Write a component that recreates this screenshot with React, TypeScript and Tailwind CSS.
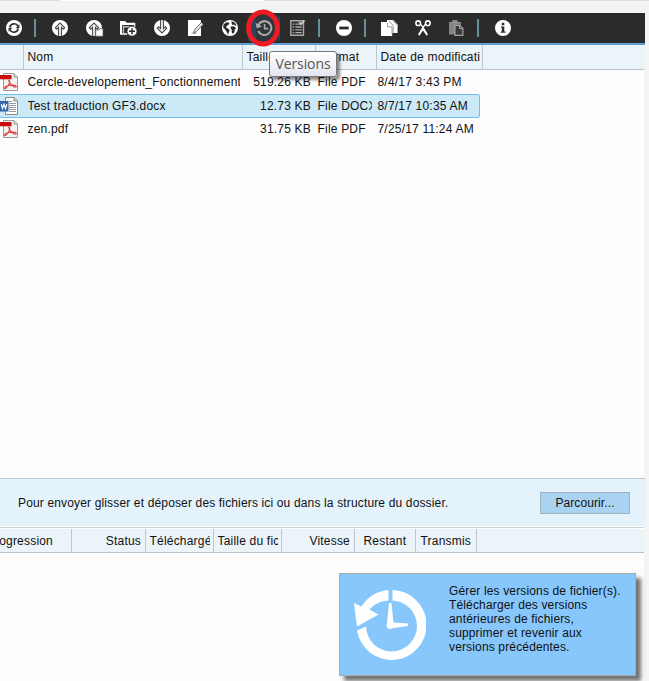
import type { ReactNode } from "react";

const W = "#fff";

function Icon({ children }: { children: ReactNode }) {
  return (
    <svg className="block h-4 w-4 overflow-visible" viewBox="0 0 16 16" fill="none">
      {children}
    </svg>
  );
}

function Tool({ children, first }: { children: ReactNode; first?: boolean }) {
  return (
    <div className={first ? "w-[31px] shrink-0 pl-[6px]" : "w-[34px] shrink-0 pl-[9px]"}>
      <Icon>{children}</Icon>
    </div>
  );
}

function Sep({ narrow }: { narrow?: boolean }) {
  return (
    <div className={narrow ? "w-[11px] shrink-0 pl-[3px]" : "w-3 shrink-0 pl-[3px]"}>
      <div className="h-[18px] w-[1.5px] bg-[#659097]" />
    </div>
  );
}

function Toolbar() {
  return (
    <div className="relative flex h-[32px] w-[645px] items-center border-b-2 border-[#649fd2] bg-[#2b2b2b]">
      <Tool first>
        <circle cx="8" cy="8" r="8" fill={W} />
        <path d="M3.8 7.2A4.4 4.4 0 0 1 12 6.2M12.2 8.8A4.4 4.4 0 0 1 4 9.8" stroke="#2b2b2b" strokeWidth="1.6" />
        <path d="M13.4 4.2v4H9.6zM2.6 11.8v-4h3.8z" fill="#2b2b2b" />
      </Tool>
      <Sep />
      <Tool>
        <circle cx="8" cy="8" r="8" fill={W} />
        <path d="M6.6 15.8V7.4L4.7 9.3 3.3 7.8 8 3l4.7 4.8-1.4 1.5-1.9-1.9v8.4" stroke="#444" strokeWidth="1.1" />
      </Tool>
      <Tool>
        <circle cx="8" cy="8" r="8" fill={W} />
        <path d="M6.6 15.8V7.4L4.7 9.3 3.3 7.8 8 3l4.7 4.8-1.4 1.5-1.9-1.9v8.4" stroke="#444" strokeWidth="1.1" />
        <path d="M9.7 16.2V10h3.1l1-1.3h3.2v7.5z" fill={W} stroke="#555" strokeWidth=".7" />
      </Tool>
      <Tool>
        <path d="M0 1h5.2l1.4 1.8h8.7V7h-1.2V5H2.2v8.2h5v1.5H0z" fill={W} />
        <path d="M3 6h7L8.5 7.4H4.2v5.5H3z" fill="#bbb" />
        <circle cx="12" cy="11.2" r="4.9" fill={W} stroke="#2b2b2b" strokeWidth=".6" />
        <path d="M12 8.2v6M9 11.2h6" stroke="#2b2b2b" strokeWidth="1.5" />
      </Tool>
      <Tool>
        <circle cx="8" cy="8" r="8" fill={W} />
        <path d="M6.6 0v8.6L4.7 6.7 3.3 8.2 8 13l4.7-4.8-1.4-1.5-1.9 1.9V0" stroke="#444" strokeWidth="1.1" />
      </Tool>
      <Tool>
        <path d="M0 0h13v16H0z" fill={W} />
        <path d="M5.6 12.9l1-3 6.8-7.4 1.8 1.7-6.8 7.5z" fill="#eee" stroke="#555" strokeWidth=".9" />
        <path d="M3.5 13.3h5" stroke="#999" />
      </Tool>
      <Tool>
        <circle cx="8" cy="8" r="8" fill={W} />
        <path d="M1.5 4.5l3-2.2 3 .5-.6 1.8-1.8.8-1.1 2 2 1.2 1.8 1.8-1.2 2.1-.5 2.2-1.7-3.2-1.5-2.3-1.7-1.4zM9.5 1.3l3.2 1.2 1.8 3-1.2.2-1.2-1.3-1.8.5-.8-1.8zM9 6.5l2.8-.2 2.4 1.9-1.4 1.1-.4 2.7-1.5 1.9-1.3-1.8.2-2.2L8.4 8z" fill="#2b2b2b" />
      </Tool>
      <div className="mx-[1px] flex h-[27px] w-8 shrink-0 items-center rounded-sm bg-[#2e4360] pl-2">
        <div className="flex h-[27px] w-[22px] items-center bg-[#2f353d]">
          <Icon>
            <path d="M2.2 5.2A6.9 6.9 0 1 1 2.2 11" stroke="#a9a9a9" strokeWidth="2.1" />
            <path d="M-.4 2.8l1.2 5.6L6 6.6z" fill="#a9a9a9" />
            <path d="M8.6 4v4.6h3.7" stroke="#a9a9a9" strokeWidth="1.6" />
          </Icon>
        </div>
      </div>
      <Tool>
        <path d="M.8.8h12.7v14.4H.8z" stroke="#aaa" strokeWidth="1.4" />
        <path d="M2.5 4.2h1.7M2.5 7h1.7M2.5 9.8h1.7M2.5 12.7h1.7M5.3 4.2h6.5M5.3 7h6.5M5.3 9.8h6.5M5.3 12.7h6.5" stroke="#aaa" strokeWidth="1.3" />
        <path d="M9.3 2l1.8 2.2L14.5.5" stroke="#ccc" strokeWidth="1.8" />
      </Tool>
      <Sep />
      <Tool>
        <circle cx="8" cy="8" r="8" fill={W} />
        <path d="M3.3 6.6h9.4v2.8H3.3z" fill="#2b2b2b" />
      </Tool>
      <Sep narrow />
      <Tool>
        <path d="M6 0h6.2L16.6 4.4V13H6z" fill={W} />
        <path d="M0 2h6.5l4.7 4.4V16H0z" fill={W} />
        <path d="M6.5 2.6v4.2H11V14M7.5.8l4.7 4.6V13M12 .8l4 4" stroke="#777" strokeWidth=".7" />
      </Tool>
      <Tool>
        <circle cx="3.2" cy="3.2" r="2.3" stroke={W} strokeWidth="1.6" />
        <circle cx="12.8" cy="3.2" r="2.3" stroke={W} strokeWidth="1.6" />
        <path d="M5 4.5l2.2 3L3.2 14l1 2L8 10.5l3.8 5.5 1-2-4-6.5 2.2-3L9.8 4 8 6.3 6.2 4z" fill={W} />
      </Tool>
      <Tool>
        <path d="M0 2h3.4V.6h5V2H12v2.8H6V14.5H0z" fill="#858585" />
        <path d="M4 .8h4v2H4z" stroke="#999" />
        <path d="M5.9 5.3h4.8l3.2 3.1v7h-8z" fill="#3a3a3a" stroke="#a5a5a5" strokeWidth="1.2" />
        <path d="M10.5 5.5v3h3" stroke="#a5a5a5" />
      </Tool>
      <Sep />
      <Tool>
        <circle cx="8" cy="8" r="8" fill={W} />
        <path d="M6.8 2.8h2.5v2.4H6.8zM6 6.4h3.3v5H10.4v1.4H5.8v-1.4h1V7.7H6z" fill="#2b2b2b" />
      </Tool>
      <svg className="absolute top-[-5px] left-[245px] z-10 h-10 w-9" viewBox="0 0 36 40" fill="none">
        <ellipse cx="18" cy="20" rx="14.4" ry="16" stroke="#ed1c24" strokeWidth="5" />
      </svg>
      <div className="absolute top-[38px] left-[269px] z-20 flex h-[26px] w-[68px] items-center justify-center rounded-[3px] border border-[#777] bg-linear-to-b from-white to-[#e5e5f0] font-['Open_Sans',sans-serif] text-[14px] tracking-[-0.1px] text-[#575757] shadow-[3px_3px_3px_rgba(0,0,0,0.45)]">
        Versions
      </div>
    </div>
  );
}

function PdfIcon() {
  return (
    <svg className="block h-[18px] w-[20px]" viewBox="0 0 20 18" fill="none">
      <path d="M3.5.5H14L17.5 4v13.5h-14z" fill="#f4f4f4" stroke="#999" />
      <path d="M14 .5V4h3.5" fill="#ddd" stroke="#999" />
      <path d="M0 2h11.5v4.3H0z" fill="#c90d0d" />
      <path d="M8.7 7.2c2 0 .6 3.5-.8 5.6-1 1.7-2.9 3.5-3.4 2.4-.7-1.4 4.4-3.2 8.2-3.1 4 .1 4.5 2.1 2.5 2-2.6-.1-6.1-4.1-6.5-6.9z" stroke="#df4545" strokeWidth="1.1" />
    </svg>
  );
}

function WordIcon() {
  return (
    <svg className="block h-[18px] w-[20px]" viewBox="0 0 20 18" fill="none">
      <path d="M5.5.5H14L17.5 4v13.5h-12z" fill="#fff" stroke="#888" />
      <path d="M14 .5V4h3.5" fill="#ddd" stroke="#888" />
      <path d="M9 4.5h3.5M9 6.5h7M9 8.5h7M9 10.5h7M9 12.5h7M9 14.5h7" stroke="#999" />
      <path d="M0 4h8.5v10.5H0z" fill="#3463a5" />
      <path d="M1.3 7l1.2 4.5L4 7.3l1.6 4.2L6.8 7" stroke="#fff" strokeWidth="1.2" />
    </svg>
  );
}

type FileRow = { name: string; size: string; format: string; date: string; word?: boolean };
const files: FileRow[] = [
  { name: "Cercle-developement_Fonctionnement", size: "519.26 KB", format: "File PDF", date: "8/4/17 3:43 PM" },
  { name: "Test traduction GF3.docx", size: "12.73 KB", format: "File DOCX", date: "8/7/17 10:35 AM", word: true },
  { name: "zen.pdf", size: "31.75 KB", format: "File PDF", date: "7/25/17 11:24 AM" },
];

function Row({ file }: { file: FileRow }) {
  return (
    <div
      className={
        file.word
          ? "flex h-6 w-[480px] items-center rounded-r-[3px] border-y border-r border-[#70bdf2] bg-[#cce9f7]"
          : "flex h-[22px] w-[480px] items-center"
      }
    >
      <div className="w-[27.5px] shrink-0">{file.word ? <WordIcon /> : <PdfIcon />}</div>
      <div className="w-[212.5px] shrink-0 overflow-hidden whitespace-nowrap">{file.name}</div>
      <div className="w-[71px] shrink-0 text-right">{file.size}</div>
      <div className="ml-[6.5px] w-[54px] shrink-0 overflow-hidden whitespace-nowrap">{file.format}</div>
      <div className="ml-[6px] whitespace-nowrap">{file.date}</div>
    </div>
  );
}

export default function App() {
  return (
    <div className="h-[681px] w-[649px] overflow-hidden bg-[#f4f4f4] font-['Liberation_Sans',Arial,sans-serif] text-[12px] leading-[14px] tracking-[0.2px] text-[#111]">
      <div className="flex h-[13px]">
        <div className="h-px w-[60px] bg-[#ddd]" />
        <div className="h-px w-[204px] bg-white" />
        <div className="h-px flex-1 bg-[#dedede]" />
      </div>
      <Toolbar />
      <div className="h-[636px] w-[644px] bg-[#fdfdfd]">
        <div className="flex h-[25px] border-b border-[#b7c3cf] bg-[#ebf4f8] leading-[25px] whitespace-nowrap">
          <div className="w-6 shrink-0 border-r border-[#bdc8d4]" />
          <div className="w-[219px] shrink-0 border-r border-[#bdc8d4] pl-[3.5px]">Nom</div>
          <div className="w-[73px] shrink-0 border-r border-[#bdc8d4] pl-[3.5px]">Taille</div>
          <div className="w-[61px] shrink-0 border-r border-[#bdc8d4] pl-1">Format</div>
          <div className="w-[106px] shrink-0 overflow-hidden border-r border-[#bdc8d4] pl-[3.5px]">Date de modificati</div>
        </div>
        <div className="h-[408px] pt-[1px]">
          <div className="h-[23px]"><Row file={files[0]} /></div>
          <Row file={files[1]} />
          <Row file={files[2]} />
        </div>
        <div className="flex h-[48px] w-[645px] items-center justify-between border-t border-[#bdc8d4] bg-[#e4f3fb] pr-[15px] pl-[18px]">
          <div className="tracking-[0.15px] whitespace-nowrap">Pour envoyer glisser et déposer des fichiers ici ou dans la structure du dossier.</div>
          <button className="h-[22px] w-[90px] border border-[#9bb3c5] bg-[#aad3f1] tracking-[0.1px]">Parcourir...</button>
        </div>
        <div className="mt-px h-px bg-[#cbd0d3]" />
        <div className="flex h-[25px] border-t border-b border-t-white border-b-[#b7c3cf] bg-[#ebf4f8] leading-[24px] whitespace-nowrap">
          <div className="flex w-[72px] shrink-0 justify-end overflow-hidden border-r border-[#bdc8d4] pr-[18px]">Progression</div>
          <div className="w-[74px] shrink-0 border-r border-[#bdc8d4] pr-1 text-right">Status</div>
          <div className="w-[68px] shrink-0 border-r border-[#bdc8d4] px-[3.5px]"><div className="overflow-hidden">Téléchargé</div></div>
          <div className="w-[68px] shrink-0 border-r border-[#bdc8d4] px-[3.5px]"><div className="overflow-hidden">Taille du fichier</div></div>
          <div className="w-[73px] shrink-0 border-r border-[#bdc8d4] pr-1 text-right">Vitesse</div>
          <div className="w-[61px] shrink-0 border-r border-[#bdc8d4] pl-[8.5px]">Restant</div>
          <div className="w-[61px] shrink-0 border-r border-[#bdc8d4] pl-[4.5px]">Transmis</div>
        </div>
        <div className="mt-[20px] ml-[339px] flex h-[103px] w-[297px] border border-[#a9a9a9] bg-[#87c7fb] shadow-[5px_5px_4px_rgba(0,0,0,0.55)]">
          <svg className="mt-4 ml-3.5 block h-[71px] w-[72px] shrink-0" viewBox="0 0 72 71" fill="none">
            <path d="M38.5 0A35 35 0 1 1 3 40.5L12 36.5A25.5 25.5 0 1 0 38.5 10.5Z" fill="#fff" />
            <path d="M34.5 0V10.5A26 26 0 0 0 15.5 19.5L24.5 24.5L3 36.5L0 13L7.5 16.5A36 36 0 0 1 34.5 0Z" fill="#fff" />
            <path d="M35 13h2.5l2 19.5L54 33.5v2.5L36.5 38.5L33 36.5V33z" fill="#fff" />
            <circle cx="36" cy="35.5" r="3.5" fill="#fff" />
          </svg>
          <p className="mt-[10px] ml-[23px] tracking-[0.15px] whitespace-nowrap">
            Gérer les versions de fichier(s).<br />
            Télécharger des versions<br />
            antérieures de fichiers,<br />
            supprimer et revenir aux<br />
            versions précédentes.
          </p>
        </div>
      </div>
    </div>
  );
}
